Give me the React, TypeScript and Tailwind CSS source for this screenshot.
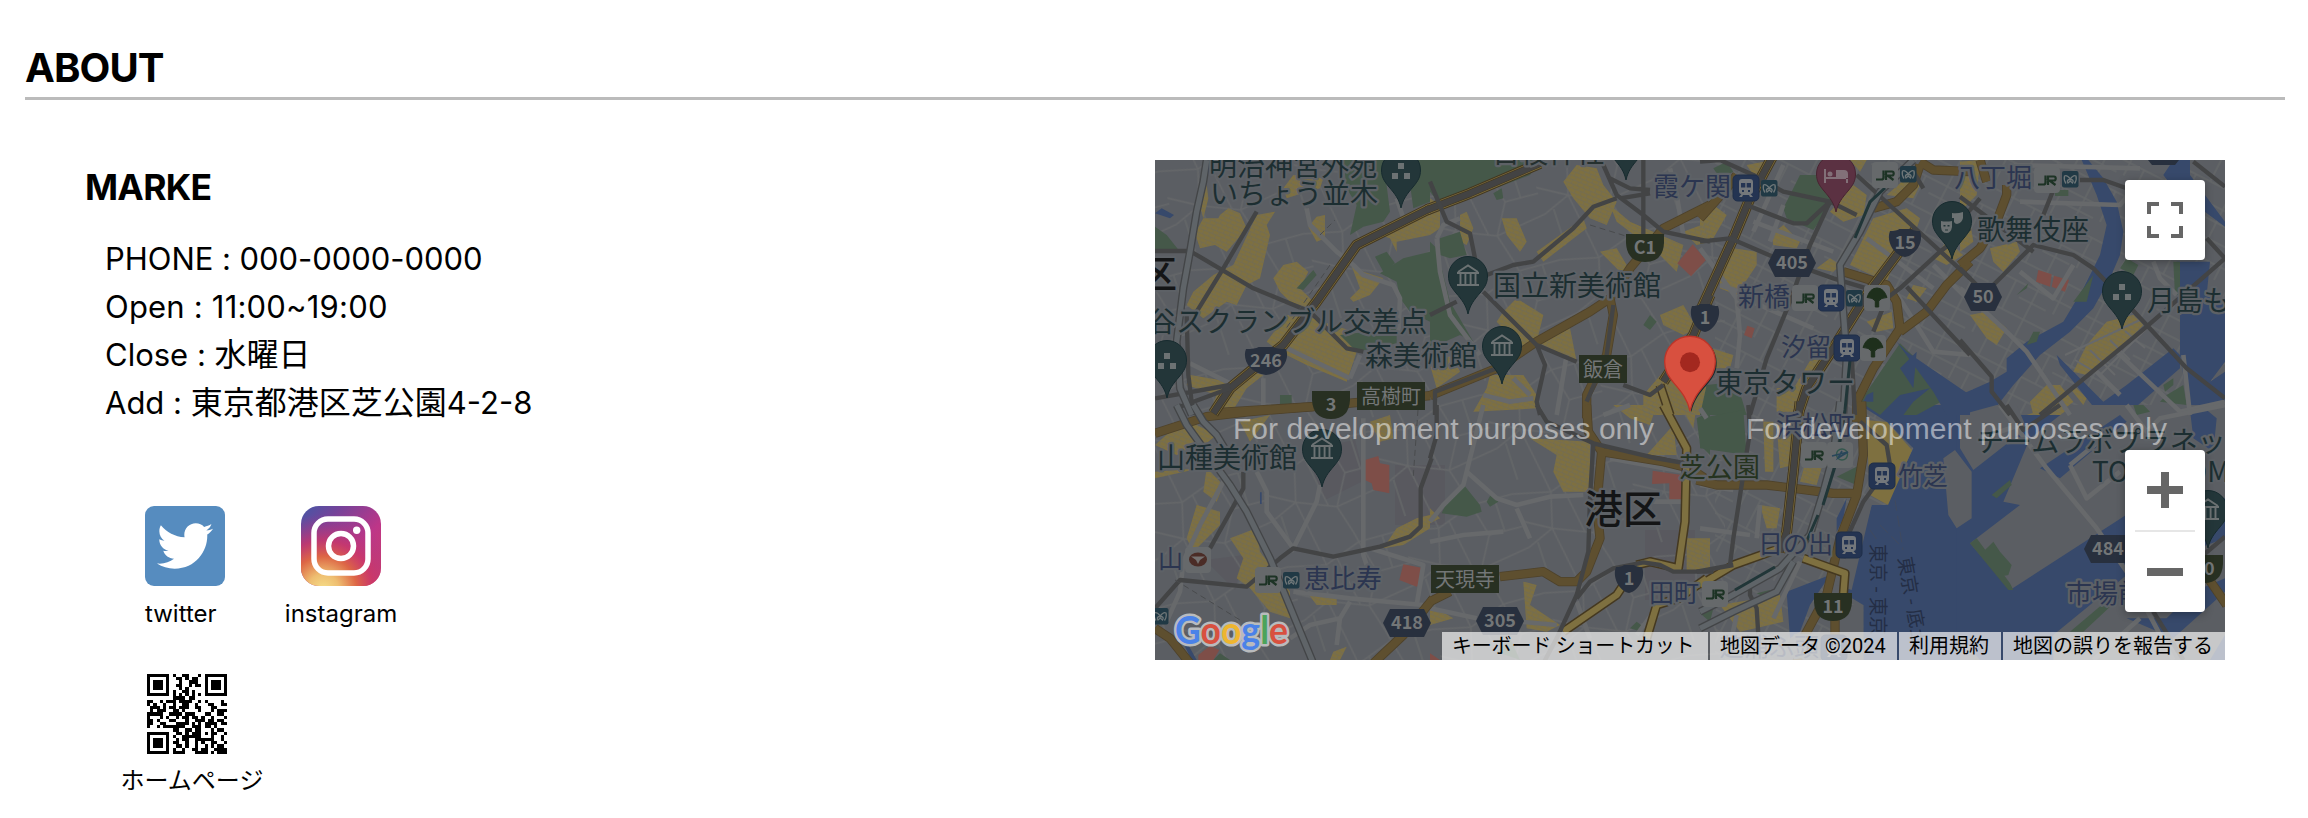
import React from "react";
import { FaTwitter } from "react-icons/fa";

type Tile = {
  x: number;
  y: number;
  land?: string;
  green?: string;
  yellow?: string;
  red?: string;
  water?: string;
  waterTop?: string;
  minor?: string;
  brown?: string;
  highway?: string;
  avenue?: string;
  major?: string;
  rail?: string;
};

const tiles: Tile[] = [
  {
    x: -5, y: -5,
    green: "M580 15L700 15 720 170 700 200 640 215 600 240 620 150 590 100Z M770 15H840V140L790 160Z M15 215L50 240 90 290 15 290Z M690 355L760 310 840 290 840 500 780 470 750 430 740 380Z M675 305L710 290 735 325 700 350Z M570 540L740 520 740 565 620 590Z M440 400L490 345 500 360 460 405Z M390 720h35v30h-35z",
    yellow: "M160 190L205 190 210 180 235 160 270 175 290 220 230 290 195 270 150 280 135 235Z M150 150L170 90 175 130 160 190Z M250 330L320 180 375 170 350 210 360 240 330 370 290 390 260 450 230 440 160 490 110 450 130 410 190 360Z M370 370L400 330 440 320 475 350 450 400 490 440 480 460 420 440 390 410Z M400 100L430 60 520 70 510 100 440 120 410 130Z M475 215L500 185 525 180 525 250 500 260Z M690 240L840 150 840 240 740 260 740 290 720 250Z M600 320L640 350 700 370 660 420 610 440 600 430 630 400Z M410 480L460 480 610 530 620 590 590 680 470 630 390 590 350 560Z M120 660L240 680 300 650 340 660 290 700 240 780 180 770 200 720 110 690Z",
    water: "M15 175L35 160 72 180 60 190Z",
    minor: "M120 625L240 685 M470 160L480 210 560 290 610 330 640 360 730 390 750 430 745 540 M400 575L600 670 M600 670L630 600 M340 670V780 M760 190L740 130",
    brown: "M210 772L490 755 840 722",
    highway: "M840 160L620 270 500 440 400 570 300 650 240 700 190 775",
    major: "M15 288H120L310 400 480 470 590 580 640 590 M320 170L220 340 140 470 M110 480L115 660 130 780 M15 730L240 690 M90 755L240 700",
    rail: "M170 15L160 80 140 170 120 290 100 400 80 560 90 700 125 780",
  },
  {
    x: 275, y: -5,
    green: "M0 15H330L300 60 40 160 0 110Z M30 250L90 230 110 300 60 310 30 300Z M0 260L20 280 60 440 130 560 90 540 0 580Z M660 480L680 500 660 525 640 510Z M190 115L215 100 220 130 200 135Z",
    yellow: "M400 80L440 30 500 40 520 90 560 140 530 210 480 190 430 130Z M540 150L600 200 760 270 740 350 690 300 600 230 560 200Z M320 290L460 190 470 220 340 320Z M215 190L260 190 290 260 270 290 230 240Z M510 290L560 280 590 330 580 360Z M220 470L260 430 340 480 320 560 290 590 240 540 200 500Z M320 560L420 520 440 620 380 590Z M180 660L280 660 320 720 320 760 130 770 170 700Z M690 480L760 450 800 520 760 540 700 510Z M90 180L110 170 130 220 110 270 90 260Z M0 130L30 150 30 220 0 240Z M640 720L700 650 840 700 840 780H640Z M0 630L70 600 90 650 20 700Z M840 200L760 230 800 270 840 260Z",
    red: "M788 268L828 315 783 364 742 325Z",
    minor: "M20 250L30 350 60 480 150 600 M160 720L240 740 310 730 M90 190L40 210 20 250 M410 600L380 780 M720 40L740 120 760 240 M300 720L250 670",
    brown: "M0 722L200 640 320 560 480 470 540 430 600 340 700 220 780 180 840 150 M540 430L550 480 530 600 470 720 470 790",
    highway: "M-10 165L120 115 330 25 M840 420L790 540 700 680",
    avenue: "M690 690L720 780",
    major: "M520 30L560 120 640 180 700 230 840 260 M540 70L600 100 660 105 M560 130L490 155 430 220 310 320 250 330 170 360 M80 440L0 480 M160 410L320 570 440 620 M320 570L345 630 320 740 330 780 M640 15V240 M570 130L660 115 M0 80L50 200 120 235 135 310 M550 450L530 600 470 740 M580 690L660 720 700 690 M15 780V710L200 640",
  },
  {
    x: 545, y: -5,
    green: "M250 160L300 60 370 60 400 140 340 225 260 190Z M480 740L600 565 760 720 650 780 540 780Z M20 690L110 680 140 780 0 780Z M40 40L80 20 100 50 60 70Z",
    waterTop: "M590 560L620 590 810 720V780H740L700 710Z M600 640L650 590 640 700Z M500 720L520 710 520 740 490 740Z M600 720L690 700 640 740 610 780 540 780 560 760Z",
    yellow: "M0 190L40 150 80 180 40 250 0 240Z M215 240L250 210 300 260 290 280 220 270Z M390 170L460 90 500 120 490 180 430 200Z M60 340L100 280 170 290 170 330 110 420 60 400Z M450 15H500L480 50Z M520 190L620 160 660 190 640 250 580 330 560 380 450 330Z M640 390L680 400 650 440 620 430Z M390 310L420 330 400 350 350 340Z M500 500L575 470 580 520 530 530Z M0 570L100 600 90 640 40 640 0 620Z M340 600L390 590 330 700 290 770 240 770Z M740 260L790 300 740 330 700 310Z M230 700L300 690 280 770 230 770Z M140 30L220 15 180 90Z M560 120L640 50 660 90 640 130Z",
    red: "M142 512L164 520 155 550 132 540Z M0 300L15 310 0 325Z",
    minor: "M0 280L110 430 120 540 110 640 M110 420L340 520 M250 30L160 230 M160 200L400 290 M60 390L230 450 M580 400L700 590 810 600 M700 330L810 440 M500 250L700 400 M250 150L210 260",
    brown: "M520 160L590 140 640 90 660 30 M660 20L700 45 810 50 M430 350L560 390 590 440 600 520 520 640 470 740 470 800 M600 530L680 470 740 390 810 320 M0 190L80 100 110 60",
    highway: "M150 130L100 250 0 470 M650 220L500 420 400 580 320 700 290 790 M220 0L150 130",
    major: "M0 20L60 15 160 60 250 110 390 140 470 180 M0 260L90 250 230 310 400 370 500 400 550 470 M140 150L280 205 320 205 390 140 330 270 270 440 200 610 150 780 M470 60L810 370 M810 220L720 290 600 400 560 430 520 530 M620 395L810 600 M670 100L640 50 M455 600L465 780",
    rail: "M640 15L540 110 480 230 420 330 430 470 440 600 430 780",
  },
  {
    x: 805, y: -5,
    green: "M340 440L400 360 380 440Z M500 310L535 330 520 360 480 340Z M170 420L205 385 200 400Z M220 530L240 530 230 560 200 570Z M620 720L670 690 680 750 600 740Z M610 690L640 670 640 690 615 710Z M285 105h40v18h-40z M640 320H660V420H645Z",
    water: "M365 15L385 15 430 70 470 140 490 230 480 300 450 370 400 460 330 530 240 600 160 690 90 780 0 780 0 720 90 680 140 650 140 610 200 560 310 500 370 400 420 300 440 210 410 120Z M610 60L640 15 690 15 690 60 795 200V215L640 100Z M650 320L750 320 740 420 795 440V620L750 680 795 650V780H690L660 600 660 420Z M290 600L430 740 500 690 640 580 660 600 660 640 500 780 420 780 300 630Z",
    yellow: "M0 20L60 15 50 120 0 170Z M0 210L30 200 40 260 0 290Z M90 280L170 260 180 290 130 350 100 320Z M30 480L80 470 140 520 110 570 80 550Z M380 570L440 500 520 480 550 510 470 590 380 660 340 650Z M210 740L260 690 300 690 340 740 290 780 220 780Z M340 690L380 730 370 750 330 700Z",
    red: "M235 345L275 358 270 395 228 380Z M282 362L327 375 315 410 275 395Z",
    minor: "M0 400L140 530 200 590 330 780 M470 590L660 770 795 740 M670 600L690 780 M180 350L280 430 340 330 M180 140L480 150 530 90 M160 30L540 40 M580 320L600 370 650 420 M400 640L480 720",
    brown: "M60 15L80 80 M0 330L60 280 110 200 140 120 140 90",
    major: "M100 390L220 270 340 300 400 340 560 510 680 640 795 730 M0 125L220 290 M240 780L560 515 795 310 M0 340L50 390 M0 555L95 665 95 710 150 780 M360 75L430 75 500 100 M740 250L795 310 M700 20L795 95 M290 80L250 180 M60 130L0 200",
  },
  {
    x: -5, y: 245,
    yellow: "M15 120L60 80 100 40 200 90 150 130 80 150Z M15 200L150 190 15 220Z M140 300L210 320 210 360 130 440 110 400Z M240 400L320 370 330 440 420 560 420 640 360 620 300 550 260 520 280 460Z M700 430L740 370 800 340 840 330V370L760 420Z M470 560L560 580 560 600 500 600Z M550 740L590 725 570 765H540Z M270 50L360 30 300 110Z M660 50L720 30 730 100 690 110Z M170 190L220 240 200 290 160 260Z",
    red: "M645 165L685 153 690 175 718 180V265L670 255 665 235 645 225Z M760 478L822 490 815 530 800 545 748 525Z M145 750L180 722 208 735 190 765H145Z",
    green: "M190 765L210 745 240 765Z",
    water: "M105 725L115 720 140 765H125Z M330 262h5v35h-5z",
    minor: "M220 230L150 360 100 470 90 560 50 650 M320 200L350 260 350 320 430 430 500 290 510 240 M640 40V350L640 450 650 480 M430 560L600 580 820 600 M800 600L820 480 660 430 M420 700L480 660 570 640 600 590 M570 640L560 720",
    brown: "M15 85L170 35 300 20 490 5 M15 670L60 700 120 775 M670 775L760 690 850 580",
    major: "M15 610L90 525 290 545 390 460 430 430 550 455 690 425 780 395 812 365V250L845 160 M180 430L280 250 280 200",
    rail: "M80 0L110 60 240 240 290 320 360 460 490 775 M130 0L160 50 200 90 230 140",
  },
  {
    x: 275, y: 245,
    green: "M35 325L55 280 100 238 150 300 155 320 110 335Z M170 290L185 265 205 290 180 305Z M600 670L620 650 640 665 635 680Z M800 40L840 20V150L810 120Z M200 740L240 700 270 765Z",
    yellow: "M300 100L480 110 480 260 400 260 370 200 380 150Z M550 0H680L660 60 600 40Z M650 150L730 60 740 150Z M280 530L320 540 300 600 390 660 350 680 290 670Z M770 400H840V500H770Z M750 0H800L790 70Z M0 310L30 340 0 355Z M0 600L70 640 0 660Z",
    red: "M668 197L755 210V292L718 288V235L666 237Z M0 745L30 765H0Z",
    minor: "M160 0L110 200 100 240 40 300 0 350 M110 200L200 280 260 300 360 275 460 270 M0 610L140 640 M270 650L380 660 M440 590L480 700 M660 290H760 M600 0L520 30 M260 310L300 400 M0 410L100 390 220 380 M700 580L620 690 M540 160L760 200",
    brown: "M470 0L475 80 515 140 700 170 780 190 840 230 M515 140L500 300 510 400 470 500 440 530 390 530 340 500 210 515 M0 590L60 560",
    avenue: "M700 0L770 130 765 350 745 490 660 470 620 480 M580 540L560 570 400 680 M830 520L745 580 680 600 650 700",
    major: "M320 0L350 50 490 115 680 160 800 180 M490 115L480 280 475 440 440 570 380 700 340 775 M440 580L480 530 550 490 640 472 690 480 730 500 850 500 M20 0V90L0 160",
  },
  {
    x: 545, y: 245,
    green: "M0 40L130 15 140 150 0 130Z M410 215L480 180 470 240 410 215Z M0 625L40 610 30 650Z M170 565L210 555 200 580Z",
    yellow: "M190 50H220V200H195Z M230 60L290 70 280 180 240 190Z M180 300L240 310 230 370 200 370Z M0 440L30 450 20 490H0Z M60 600L240 570 250 650 120 680Z M320 160L370 170 350 240 300 230Z",
    water: "M480 0H810V765H490V600L440 570 515 300 560 300 640 130 560 50Z M440 280L410 340 410 380 430 340Z M260 560L390 510 330 600 300 680 270 700Z",
    land: "M730 160L765 135 815 200V340L770 370 745 330Z M490 290L515 300 455 555 410 540Z M400 600H490V765H400Z",
    minor: "M0 240L100 255 M0 370L150 390 M220 640L300 470 M110 630L80 765 M180 300L170 400 M0 10L20 40",
    brown: "M485 -10L490 150 470 270 420 400 380 570 310 700 290 775 M-10 225L50 240 200 240 400 265 470 265 M405 640V775",
    highway: "M300 -10L280 200 260 380 240 440",
    avenue: "M0 540L100 480 240 430 M310 460L435 505 430 570",
    major: "M145 0L150 80 100 400 90 480 M-10 500L100 480 M430 460L440 400 490 290 570 180 560 120 480 50 M150 530V570L170 610 175 690",
    rail: "M420 -10L400 150 370 260 330 390 240 490 80 580 0 620 M280 470L230 560 100 620 0 670",
  },
  {
    x: 805, y: 245,
    water: "M-10 30H795V765H-10Z",
    land: "M110 0H170L200 70 40 195 0 130 0 30Z M210 100L340 0H795V280L560 290 150 555 30 415 180 300 130 290Z M280 690L500 510 795 400V765H280Z M0 690L0 765 60 765Z",
    green: "M65 445L100 410 120 440 155 480 145 510 120 515Z M95 270L150 225 155 240 110 280Z M30 415L50 400 150 535 160 555 145 555Z M330 680L520 520V540L370 680Z M520 0H550L570 20 530 30Z",
    waterTop: "M690 15H740L770 40 760 140 700 100Z M240 190L480 30 500 50 300 220Z M750 765L795 690V765Z M500 640L620 640 700 560 795 520V560L640 700Z",
    yellow: "M200 30L300 0 370 30 330 50 240 60Z M480 530l15 -10v20z",
    minor: "M120 0L260 190 410 370 500 500 640 765 M500 0L560 80 600 40 795 0 M400 765L540 640 M60 100L180 60 M330 180L440 90 M330 180L380 280 480 200",
    brown: "M745 520L800 600",
    major: "M140 0L190 75 300 0 M580 620L670 765 M730 450L795 395",
  },
];

type Layer = Exclude<keyof Tile, "x" | "y">;

const Fills = ({ layer, color }: { layer: Layer; color: string }) => (
  <>
    {tiles.map((t, i) => (t[layer] ? (
      <path key={i} d={t[layer] as string} fill={color} transform={`translate(${t.x} ${t.y}) scale(.33333)`} />
    ) : null))}
  </>
);

const Roads = ({ layer, color, width }: { layer: Layer; color: string; width: number }) => (
  <>
    {tiles.map((t, i) => (t[layer] ? (
      <path key={i} d={t[layer] as string} fill="none" stroke={color} strokeWidth={width}
        strokeLinejoin="round" transform={`translate(${t.x} ${t.y}) scale(.33333)`} />
    ) : null))}
  </>
);

const labels: [string, number, number, number, string][] = [
  ["明治神宮外苑", 54, 16, 28, "#1c2e31"],
  ["いちょう並木", 55, 44, 28, "#1c2e31"],
  ["谷スクランブル交差点", -7, 172, 28, "#1c2e31"],
  ["森美術館", 210, 206, 28, "#1c2e31"],
  ["国立新美術館", 338, 136, 28, "#1c2e31"],
  ["日枝神社", 337, 3, 28, "#25302f"],
  ["霞ケ関", 498, 36, 26, "#2b3550"],
  ["東京タワー", 560, 233, 28, "#1c2e31"],
  ["新橋", 583, 146, 26, "#2b3550"],
  ["汐留", 626, 196, 25, "#2b3550"],
  ["八丁堀", 799, 27, 26, "#2b3550"],
  ["歌舞伎座", 822, 80, 28, "#1c2e31"],
  ["月島もんじゃ", 992, 151, 28, "#1c2e31"],
  ["山種美術館", 2, 308, 28, "#1c2e31"],
  ["山", 3, 408, 25, "#2b3550"],
  ["恵比寿", 149, 428, 26, "#2b3550"],
  ["芝公園", 524, 317, 27, "#25331f"],
  ["田町", 494, 442, 25, "#2b3550"],
  ["浜松町", 621, 275, 26, "#2b3550"],
  ["竹芝", 743, 325, 25, "#2b3550"],
  ["日の出", 603, 393, 25, "#2b3550"],
  ["芝浦ふ頭", 564, 496, 25, "#2b3550"],
  ["チームラボプラネッツ", 821, 292, 28, "#1c2e31"],
  ["TOKYO DMM", 937, 322, 28, "#1c2e31"],
  ["市場前", 911, 443, 26, "#2b3550"],
];

type PinKind = "dots" | "museum" | "bed" | "mask" | "plain";

const pinPath = "M0 0C-2 -9 -6 -14 -12 -21C-17 -27 -19.5 -31 -19.5 -38A19.5 19.5 0 0 1 19.5 -38C19.5 -31 17 -27 12 -21C6 -14 2 -9 0 0Z";

const Pin = ({ x, y, kind }: { x: number; y: number; kind: PinKind }) => (
  <g transform={`translate(${x} ${y})`}>
    <path d={pinPath} fill={kind === "bed" ? "#5b3142" : "#233639"} stroke={kind === "bed" ? "#482431" : "#172b2f"} />
    {kind === "dots" && <path d="M-3 -45h6v6h-6zM-9 -35h6v6h-6zM3 -35h6v6h-6z" fill="#6c7273" />}
    {kind === "museum" && (
      <path d="M-10 -42L0 -48.5L10 -42M-11 -41H11M-11 -29H11M-7.5 -40V-29M-2.6 -40V-29M2.6 -40V-29M7.5 -40V-29" fill="none" stroke="#6c7273" strokeWidth="1.9" />
    )}
    {kind === "bed" && (
      <g fill="#827078">
        <path d="M-12 -43h2v10h22v-5q0 -4 -4 -4h-8v7h-10v6h-2zM10 -34h2v5h-2z" />
        <circle cx="-6" cy="-38" r="2.5" />
      </g>
    )}
    {kind === "mask" && (
      <g fill="#6c7273">
        <path d="M0 -46q5 1 11 -1v6q-1 5 -6 6q-2 0 -3 -2v-4h-2z" />
        <path d="M-11 -38q5 1 11 0v6q-1 6 -5.500 6q-5 0 -5.500 -6z" />
        <path d="M-8.500 -34h2v1.500h-2zM-4.500 -34h2v1.500h-2zM-7 -29.500h3v1h-3z" fill="#233639" />
      </g>
    )}
  </g>
);

const pins: [number, number, PinKind][] = [
  [246, 48, "dots"], [12, 238, "dots"], [313, 154, "museum"], [347, 224, "museum"], [471, 20, "plain"],
  [681, 52, "bed"], [797, 99, "mask"], [967, 169, "dots"], [167, 327, "museum"], [1053, 388, "museum"],
];

const Badge = ({ x, y, w, kind, text }: { x: number; y: number; w: number; kind: "hex" | "shield" | "metro" | "box"; text: string }) => {
  const shape = {
    hex: `M7 0H${w - 7}L${w} 14L${w - 7} 28H7L0 14Z`,
    shield: `M2 2Q${w / 4} 2 ${w / 3} 0H${(w * 2) / 3}Q${w * 0.75} 2 ${w - 2} 2C${w + 2} 12 ${w - 5} 26 ${w / 2} 28C5 26 -2 12 2 2Z`,
    metro: `M0 0H${w}V9Q${w - 1} 28 ${w / 2} 28Q1 28 0 9Z`,
    box: `M0 0H${w}V28H0Z`,
  }[kind];
  const green = kind === "metro" || kind === "box";
  return (
    <g transform={`translate(${x} ${y})`}>
      <path d={shape} fill={green ? "#283022" : "#28303e"} />
      <text x={w / 2} y={kind === "box" ? 21.5 : 20} textAnchor="middle" fill="#737677" fontSize={kind === "box" ? 20 : 18} fontWeight={kind === "box" ? 400 : 700}>
        {text}
      </text>
    </g>
  );
};

const Train = ({ x, y }: { x: number; y: number }) => (
  <g transform={`translate(${x} ${y})`}>
    <rect width="26" height="26" rx="4.500" fill="#243452" stroke="#1f2e49" />
    <path d="M9 4h8q3 0 3 3v9q0 3 -2.500 3l2.500 3h-3l-1 -2h-6l-1 2H6l2.500 -3Q6 19 6 16V7q0 -3 3 -3z" fill="#73777b" />
    <path d="M8 8h4.300v4.500H8zM13.700 8H18v4.500h-4.300zM9 15h2v2H9zM15 15h2v2h-2z" fill="#243452" />
  </g>
);

const Metro = ({ x, y }: { x: number; y: number }) => (
  <g transform={`translate(${x} ${y})`}>
    <rect width="16.500" height="16.500" rx="2" fill="#203945" />
    <path d="M4 12.500Q1.500 9 2.500 5Q5 3.500 8.250 8Q11.500 3.500 14 5Q15 9 12.500 12.500M6 12Q4 8.500 8.250 8.500Q12.500 8.500 10.500 12L8.250 10z" fill="none" stroke="#6e7678" strokeWidth="1.300" />
  </g>
);

const Plate = ({ x, y, kind }: { x: number; y: number; kind: "jr" | "ginkgo" | "mono" | "tokyu" }) => (
  <g transform={`translate(${x} ${y})`}>
    <rect width="26" height="26" rx="4" fill="#66696b" />
    {kind === "jr" && <path d="M4 17.500H9.500Q11.500 17.500 11.500 15.500V8.500M14 18V9.500H20Q21.700 9.500 21.700 11.500Q21.700 13.500 20 13.500H15.500L21.500 18" fill="none" stroke="#1d3325" strokeWidth="2.200" />}
    {kind === "ginkgo" && <path d="M3 12.500Q6 3 13 3Q20 3 23 12.500Q17 12.500 14.700 16V22H11.300V16Q9 12.500 3 12.500Z" fill="#1e2f1c" stroke="#1e2f1c" />}
    {kind === "mono" && (
      <g fill="none" stroke="#28465a">
        <circle cx="15" cy="12.500" r="5.500" stroke="#33574d" strokeWidth="1.400" />
        <path d="M5 14L21 10L11 16L15 9" strokeWidth="1.600" />
      </g>
    )}
    {kind === "tokyu" && (
      <g>
        <ellipse cx="13" cy="12.500" rx="9" ry="7" fill="#4b2c26" />
        <path d="M6 9.500H20L15 13L13 17L11 13Z" fill="#747170" />
      </g>
    )}
  </g>
);

const watermark = "For development purposes only";

const MapDrawing = () => (
  <svg viewBox="0 0 1070 500" className="block h-[500px] w-[1070px] font-['Noto_Sans_CJK_JP',sans-serif]">
    <defs>
      <pattern id="streets-west" width="118" height="104" patternUnits="userSpaceOnUse" patternTransform="rotate(-18)">
        <path d="M0 12L38 22L76 10L118 12M0 68L28 57L66 74L118 68M38 22L28 57L35 104M35 0L38 22M76 10L84 44L66 74L74 104M74 0L76 10M84 44L118 46M28 57L0 40M100 12V45M50 18L58 70M10 66V104" fill="none" stroke="#656769" strokeWidth="1.500" />
      </pattern>
      <pattern id="streets-east" width="64" height="52" patternUnits="userSpaceOnUse" patternTransform="rotate(27)">
        <path d="M0 8H64M0 28H64M0 42H30M14 0V52M38 8V42M54 28V52M54 0V8" fill="none" stroke="#656769" strokeWidth="1.500" />
      </pattern>
      <pattern id="streets-fine" width="19" height="24" patternUnits="userSpaceOnUse" patternTransform="rotate(22)">
        <path d="M0 4H19M0 16H19M6 4V16M14 16V28M14 0V4" fill="none" stroke="#6b695d" strokeWidth="1.500" />
      </pattern>
    </defs>
    <rect width="1070" height="500" fill="#5b5e63" />
    <path d="M240 305H290V365H240ZM490 370H540V440H490ZM150 290L200 280 210 320 170 340ZM50 400L90 395 80 430Z" fill="#59595f" />
    <rect width="570" height="500" fill="url(#streets-west)" />
    <rect x="560" width="510" height="500" fill="url(#streets-east)" />
    <Fills layer="yellow" color="#7e7040" />
    <Fills layer="yellow" color="url(#streets-fine)" />
    <Fills layer="water" color="#37496b" />
    <Fills layer="land" color="#5b5e63" />
    <Fills layer="green" color="#455849" />
    <Fills layer="waterTop" color="#37496b" />
    <Fills layer="red" color="#7e4e48" />
    <path d="M711 260L732 262 757 290 733 345 715 335Z" fill="#7e7040" />
    <path d="M910 195L985 160M1000 160L945 215L920 200M935 190L960 215M955 180L975 200M970 171L990 188" fill="none" stroke="#67696b" strokeWidth="2" />
    <Roads layer="minor" color="#67696b" width={14} />
    <Roads layer="brown" color="#4e422b" width={28} />
    <Roads layer="brown" color="#5e4f2f" width={23} />
    <Roads layer="highway" color="#443820" width={33} />
    <Roads layer="highway" color="#7e7040" width={27} />
    <Roads layer="highway" color="#443820" width={23} />
    <Roads layer="highway" color="#434343" width={19} />
    <Roads layer="avenue" color="#443820" width={28} />
    <Roads layer="avenue" color="#7e7040" width={19} />
    <Roads layer="major" color="#434445" width={13} />
    <Roads layer="rail" color="#434547" width={24} />
    <Roads layer="rail" color="#5f6468" width={16} />
    <path d="M730 28L715 42L700 78M695 200L690 250L682 300L668 345M663 355L650 385M620 407L580 430" fill="none" stroke="#213638" strokeWidth="3" />
    <path d="M740 340L748 390M715 370L722 380M725 365L745 385" fill="none" stroke="#404a5f" strokeDasharray="11 5" />
    <path d="M165 75L180 60M175 105L130 170M20 420L85 460M435 65L500 85M263 250L258 320" fill="none" stroke="#494b4d" strokeDasharray="6 4" />

    {pins.map(([x, y, kind]) => <Pin key={`${x}-${y}`} x={x} y={y} kind={kind} />)}

    <g stroke="#5d6166" strokeWidth="4.500" strokeLinejoin="round" paintOrder="stroke">
      {labels.map(([text, x, y, size, color]) => (
        <text key={text} x={x} y={y} fontSize={size} fill={color}>{text}</text>
      ))}
      <text x="429" y="363" fontSize="39" fontWeight="500" fill="#141516">港区</text>
      <text x="-16" y="128" fontSize="38" fontWeight="500" fill="#141516">区</text>
    </g>
    <g fontSize="19" fill="#242e45">
      <text transform="translate(716 384) rotate(90)">東京 - 東京</text>
      <text transform="translate(743 398) rotate(80)">東京 - 底土</text>
    </g>

    <Badge x={89} y={187} w={44} kind="shield" text="246" />
    <Badge x={535} y={144} w={30} kind="shield" text="1" />
    <Badge x={733} y={69} w={34} kind="shield" text="15" />
    <Badge x={459} y={405} w={30} kind="shield" text="1" />
    <Badge x={613} y={89} w={48} kind="hex" text="405" />
    <Badge x={809} y={123} w={38} kind="hex" text="50" />
    <Badge x={228} y={449} w={48} kind="hex" text="418" />
    <Badge x={321} y={447} w={48} kind="hex" text="305" />
    <Badge x={929} y={375} w={48} kind="hex" text="484" />
    <path d="M993 0H1024L1020 5H997Z" fill="#28303e" />
    <Badge x={157} y={231} w={38} kind="metro" text="3" />
    <Badge x={471} y={74} w={38} kind="metro" text="C1" />
    <Badge x={659} y={433} w={38} kind="metro" text="11" />
    <Badge x={1030} y={395} w={38} kind="metro" text="10" />
    <Badge x={202} y={222} w={68} kind="box" text="高樹町" />
    <Badge x={424} y={195} w={48} kind="box" text="飯倉" />
    <Badge x={276} y={405} w={68} kind="box" text="天現寺" />

    <Train x={578} y={15} />
    <Train x={663} y={125} />
    <Train x={679} y={175} />
    <Train x={714} y={303} />
    <Train x={681} y={372} />
    <Train x={666} y={475} />
    <Metro x={606} y={20} />
    <Metro x={691} y={130} />
    <Metro x={745} y={6} />
    <Metro x={907} y={11} />
    <Metro x={128} y={412} />
    <Metro x={-3} y={448} />
    <Plate x={717} y={2} kind="jr" />
    <Plate x={637} y={125} kind="jr" />
    <Plate x={879} y={7} kind="jr" />
    <Plate x={646} y={282} kind="jr" />
    <Plate x={547} y={421} kind="jr" />
    <Plate x={100} y={407} kind="jr" />
    <Plate x={30} y={387} kind="tokyu" />
    <Plate x={672} y={282} kind="mono" />
    <Plate x={709} y={125} kind="ginkgo" />
    <Plate x={705} y={175} kind="ginkgo" />

    <g transform="translate(535 251) scale(1.300)">
      <path d={pinPath} fill="#172b2f" transform="translate(1 .8)" />
      <path d={pinPath} fill="#d8503f" stroke="#bc3529" strokeWidth="1" />
      <circle cy="-37.500" r="7.700" fill="#a3281f" />
    </g>

    <g className="font-['Liberation_Sans',sans-serif]" fontSize="30" fill="#ffffff" fillOpacity=".5">
      <text x="78" y="279" textLength="421">{watermark}</text>
      <text x="591" y="279" textLength="421">{watermark}</text>
    </g>

    <text x="20" y="484" fontSize="37.500" fontWeight="700" textLength="113" lengthAdjust="spacingAndGlyphs" stroke="#b9bbbd" strokeWidth="5" strokeLinejoin="round" paintOrder="stroke" className="font-['Lato',sans-serif]">
      <tspan fill="#4b82e8">G</tspan><tspan fill="#d8503f">o</tspan><tspan fill="#eeb52f">o</tspan><tspan fill="#4b82e8">g</tspan><tspan fill="#4ca35a">l</tspan><tspan fill="#d8503f">e</tspan>
    </text>
  </svg>
);

const qrRows = [
  "#######.#..##...#.#######",
  "#.....#..##.#.##..#.....#",
  "#.###.#...#..###..#.###.#",
  "#.###.#..##..#.##.#.###.#",
  "#.###.#...#.#.....#.###.#",
  "#.....#.#..##.#...#.....#",
  "#######.#.#.#.#.#.#######",
  "........####.##..........",
  "##..#.###.####..#.#....#.",
  "#.#..#..#..##..#...##..##",
  ".###.#.##.###..##...##...",
  ".#.###..##.#....#...#.###",
  "#####..####.###...##..##.",
  "#...#.#..#.##.##.#..#...#",
  "##.#...##...#..###.##.##.",
  "##..##...####.#.#.####.##",
  "#..#.#######..###.##.#...",
  "........##..##.##...#.##.",
  "#######..##.#.###.#.##..#",
  "#.....#.#..######...#..#.",
  "#.###.#..#.##..######..#.",
  "#.###.#.##..#..#.#..##..#",
  "#.###.#..##.#..#..#.#.##.",
  "#.....#.#..#..##.##..####",
  "#######.####...####.#.###",
];

const QrCode = () => (
  <svg viewBox="0 0 25 25" className="size-20" shapeRendering="crispEdges">
    {qrRows.map((row, y) =>
      row.split("").map((cell, x) => (cell === "#" ? <rect key={`${x}-${y}`} x={x} y={y} width="1" height="1" /> : null))
    )}
  </svg>
);

const InstagramIcon = () => (
  <svg viewBox="0 0 80 80" className="size-20">
    <defs>
      <linearGradient id="ig-base" x1="0" y1="0" x2="1" y2="1">
        <stop offset="0" stopColor="#4457a6" />
        <stop offset=".25" stopColor="#74439a" />
        <stop offset=".6" stopColor="#bd3688" />
        <stop offset="1" stopColor="#cf3d66" />
      </linearGradient>
      <radialGradient id="ig-glow" cx=".28" cy="1.050" r="1">
        <stop offset="0" stopColor="#f6e08a" />
        <stop offset=".2" stopColor="#eebd70" />
        <stop offset=".42" stopColor="#dd6645" />
        <stop offset=".62" stopColor="#cb3768" stopOpacity=".8" />
        <stop offset=".95" stopColor="#a2378f" stopOpacity="0" />
      </radialGradient>
    </defs>
    <rect width="80" height="80" rx="18" fill="url(#ig-base)" />
    <rect width="80" height="80" rx="18" fill="url(#ig-glow)" />
    <rect x="13" y="13" width="54" height="54" rx="14" fill="none" stroke="#fff" strokeWidth="5.500" />
    <circle cx="40" cy="40" r="12.500" fill="none" stroke="#fff" strokeWidth="5.500" />
    <circle cx="55.700" cy="24.300" r="3.700" fill="#fff" />
  </svg>
);

const FullscreenButton = () => (
  <div className="flex size-20 items-center justify-center rounded-[4px] bg-white shadow-[0_2px_8px_rgba(0,0,0,0.3)]">
    <svg viewBox="0 0 18 18" className="size-9" fill="#666">
      <path d="M0 0v6h2V2h4V0zM12 0v2h4v4h2V0zM0 12v6h6v-2H2v-4zM16 12v4h-4v2h6v-6z" />
    </svg>
  </div>
);

const ZoomControls = () => (
  <div className="flex h-[162px] w-20 flex-col items-center rounded-[4px] bg-white shadow-[0_2px_8px_rgba(0,0,0,0.3)]">
    <div className="flex h-20 items-center">
      <svg viewBox="0 0 18 18" className="size-9" fill="#666"><path d="M18 7h-7V0H7v7H0v4h7v7h4v-7h7z" /></svg>
    </div>
    <div className="h-[2px] w-[60px] bg-[#e6e6e6]" />
    <div className="flex h-20 items-center">
      <svg viewBox="0 0 18 18" className="size-9" fill="#666"><path d="M0 7h18v4H0z" /></svg>
    </div>
  </div>
);

const MapPanel = () => (
  <div className="relative h-[500px] w-[1070px] shrink-0 overflow-hidden">
    <MapDrawing />
    <div className="absolute top-5 right-5"><FullscreenButton /></div>
    <div className="absolute top-[290px] right-5"><ZoomControls /></div>
    <div className="absolute right-0 bottom-0 flex h-7 gap-[2px] whitespace-nowrap font-['Roboto','Noto_Sans_CJK_JP',sans-serif] text-[20px] leading-[29px] text-black">
      <span className="w-[266px] bg-[#f5f5f5]/70 pl-[10px] tracking-[-0.2px]">キーボード ショートカット</span>
      <span className="w-[187px] bg-[#f5f5f5]/70 pl-[10px]">地図データ ©2024</span>
      <span className="w-[102px] bg-[#f5f5f5]/70 pl-[10px]">利用規約</span>
      <span className="w-[222px] bg-[#f5f5f5]/70 pl-[10px]">地図の誤りを報告する</span>
    </div>
  </div>
);

export default function App() {
  return (
    <main className="h-[818px] w-[2308px] overflow-hidden bg-white pt-10 pl-[25px] font-['Inter','Noto_Sans_CJK_JP',sans-serif] text-black">
      <h1 className="h-[60px] w-[2260px] border-b-[3px] border-[#bbb] text-[40px] leading-[56px] font-bold tracking-[-0.9px]">ABOUT</h1>
      <div className="flex pt-[60px]">
        <section className="w-[1130px] pl-[60px]">
          <h2 className="pt-[3px] text-[35.5px] leading-[50px] font-bold tracking-[-0.7px]">MARKE</h2>
          <div className="pt-[22px] pl-5 text-[31px] leading-[48px]">
            <p className="tracking-[-0.05px]">PHONE : 000-0000-0000</p>
            <p className="tracking-[0.2px]">Open : 11:00~19:00</p>
            <p>Close : <span className="text-[32px] leading-none">水曜日</span></p>
            <p>Add : <span className="text-[32px] leading-none">東京都港区芝公園</span>4-2-8</p>
          </div>
          <div className="flex pt-[79px] pl-[60px] text-2xl leading-9">
            <div className="w-[141px]">
              <div className="flex size-20 items-center justify-center rounded-[9px] bg-[#568cbf]">
                <FaTwitter className="size-14 text-white" />
              </div>
              <p className="pt-[10px]">twitter</p>
            </div>
            <div className="flex w-[110px] flex-col items-center">
              <InstagramIcon />
              <p className="pt-[10px]">instagram</p>
            </div>
          </div>
          <div className="ml-[25px] flex w-[154px] flex-col items-center pt-[42px] text-2xl leading-9">
            <QrCode />
            <p className="pt-[9px] pl-2.5 whitespace-nowrap">ホームページ</p>
          </div>
        </section>
        <MapPanel />
      </div>
    </main>
  );
}
